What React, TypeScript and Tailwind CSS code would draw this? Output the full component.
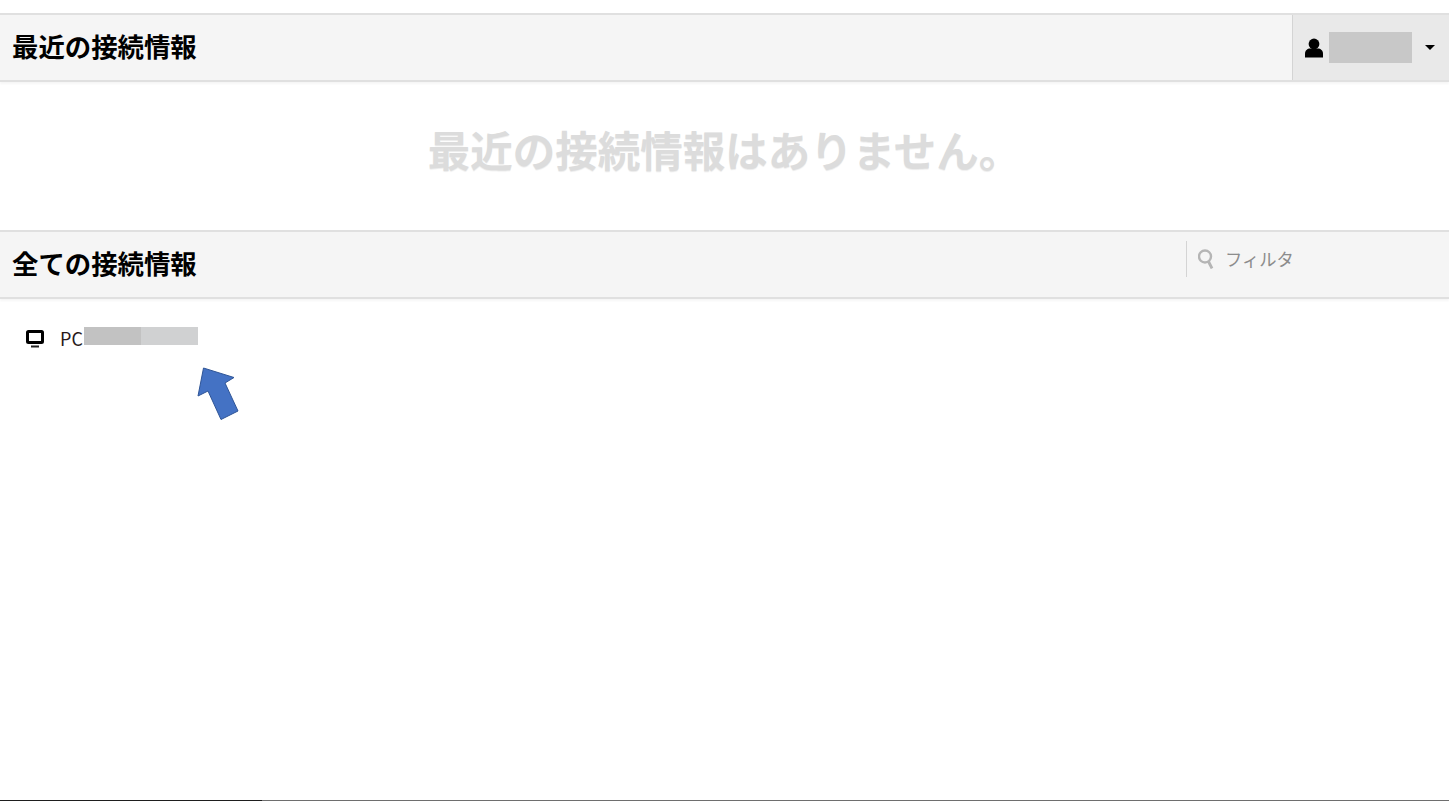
import React from "react";

const font = { fontFamily: '"Noto Sans CJK JP", "Liberation Sans", sans-serif' };

function UserIcon() {
  return (
    <svg width="18" height="20" viewBox="0 0 18 20" fill="#000" aria-hidden="true">
      <circle cx="9" cy="6" r="5.400" />
      <path d="M0 19.500v-4c0-3 2.500-5 5-5h8c2.500 0 5 2 5 5v4z" />
    </svg>
  );
}

function MonitorIcon() {
  return (
    <svg width="18" height="18" viewBox="0 0 18 18" aria-hidden="true">
      <rect x="1.500" y="1.500" width="15" height="11" rx="1" fill="none" stroke="#000" strokeWidth="3" />
      <rect x="5" y="15.500" width="8" height="2" fill="#222" />
    </svg>
  );
}

function SearchIcon() {
  return (
    <svg width="16" height="20" viewBox="0 0 16 20" fill="none" stroke="#b5b5b5" aria-hidden="true">
      <circle cx="7" cy="7.500" r="6" strokeWidth="2.400" />
      <path d="M10.500 12.500l3.500 7" strokeWidth="2.800" />
    </svg>
  );
}

function Arrow() {
  return (
    <svg className="absolute left-[196px] top-[366px]" width="44" height="56" viewBox="0 0 44 56" aria-hidden="true">
      <path d="M7.500 2L38 11.500L29 17L42 45L25 53.500L12 25L2 30z" fill="#4472c4" stroke="#2f5597" strokeWidth="1" />
    </svg>
  );
}

function SectionBar({ title, children }: { title: string; children?: React.ReactNode }) {
  return (
    <div className="flex h-[69px] items-stretch border-y-2 border-[#e0e0e0] bg-[#f5f5f5] shadow-[0_2px_2px_rgba(0,0,0,0.04)]">
      <h2 className="flex-1 pl-3 text-[26.400px] font-bold leading-[62px] text-black">{title}</h2>
      {children}
    </div>
  );
}

export default function App() {
  return (
    <div className="relative h-[801px] overflow-hidden bg-white" style={font}>
      <div className="pt-[13px]">
        <SectionBar title="最近の接続情報">
          <div className="flex w-[157px] items-center border-l border-[#d4d4d4] bg-[#e9e9e9] pl-[12px]">
            <UserIcon />
            <div className="ml-[6px] h-[31px] w-[83px] bg-[#c8c8c8]" />
            <div className="ml-[13px] h-0 w-0 border-x-[5px] border-t-[5px] border-x-transparent border-t-black" />
          </div>
        </SectionBar>
      </div>

      <div className="flex h-[148px] items-center justify-center pb-[14px]">
        <p className="text-[42.500px] leading-none font-bold text-[#dcdcdc] [text-shadow:0_1px_1px_rgba(0,0,0,0.08)]">
          最近の接続情報はありません。
        </p>
      </div>

      <SectionBar title="全ての接続情報">
        <div className="flex w-[263px] items-start pt-[9px]">
          <div className="flex h-[36px] items-center border-l border-[#d4d4d4] pl-[11px]">
            <SearchIcon />
            <span className="ml-[11px] text-[17.300px] font-normal text-[#8c8c8c]">フィルタ</span>
          </div>
        </div>
      </SectionBar>

      <ul className="pt-[27px] pl-[26px]">
        <li className="flex h-[20px] items-center">
          <span className="mt-[6px]">
            <MonitorIcon />
          </span>
          <span className="mt-[4px] ml-[16px] w-[24px] text-[18px] text-[#2a1a1a]">PC</span>
          <div className="flex h-[18px]">
            <div className="h-full w-[57px] bg-[#c2c2c2]" />
            <div className="h-full w-[57px] bg-[#d0d1d2]" />
          </div>
        </li>
      </ul>

      <Arrow />

      <div className="absolute bottom-0 left-0 flex h-px w-full">
        <div className="w-[262px] bg-[#1e1e1e]" />
        <div className="flex-1 bg-[#6e6e6e]" />
      </div>
    </div>
  );
}
